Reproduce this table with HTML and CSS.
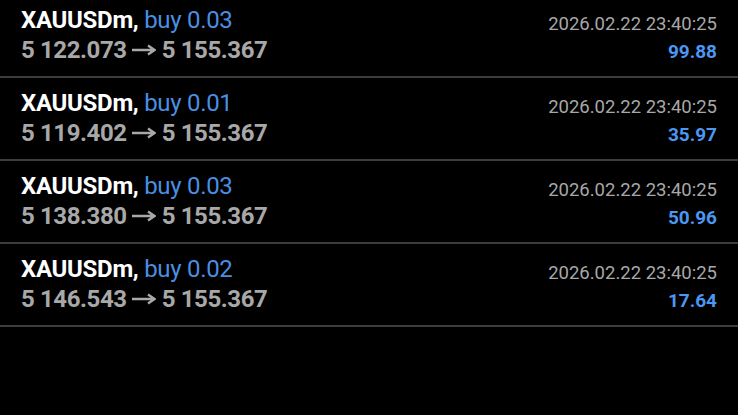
FILE: index.html
```html
<!DOCTYPE html>
<html lang="en">
<head>
    <meta charset="UTF-8">
    <meta name="viewport" content="width=device-width, initial-scale=1.0">
    <title>Positions</title>
    <link rel="stylesheet" href="styles.css">
</head>
<body>
    <div class="list">
        <div class="row">
            <div class="left">
                <div class="title"><span class="symbol">XAUUSDm,</span> <span class="side">buy 0.03</span></div>
                <div class="prices">5 122.073<svg class="arrow" viewBox="0 0 24 12"><path d="M0 6H22M16 1.5L22.5 6L16 10.5"/></svg>5 155.367</div>
            </div>
            <div class="right">
                <div class="time">2026.02.22 23:40:25</div>
                <div class="profit">99.88</div>
            </div>
        </div>
        <div class="row">
            <div class="left">
                <div class="title"><span class="symbol">XAUUSDm,</span> <span class="side">buy 0.01</span></div>
                <div class="prices">5 119.402<svg class="arrow" viewBox="0 0 24 12"><path d="M0 6H22M16 1.5L22.5 6L16 10.5"/></svg>5 155.367</div>
            </div>
            <div class="right">
                <div class="time">2026.02.22 23:40:25</div>
                <div class="profit">35.97</div>
            </div>
        </div>
        <div class="row">
            <div class="left">
                <div class="title"><span class="symbol">XAUUSDm,</span> <span class="side">buy 0.03</span></div>
                <div class="prices">5 138.380<svg class="arrow" viewBox="0 0 24 12"><path d="M0 6H22M16 1.5L22.5 6L16 10.5"/></svg>5 155.367</div>
            </div>
            <div class="right">
                <div class="time">2026.02.22 23:40:25</div>
                <div class="profit">50.96</div>
            </div>
        </div>
        <div class="row">
            <div class="left">
                <div class="title"><span class="symbol">XAUUSDm,</span> <span class="side">buy 0.02</span></div>
                <div class="prices">5 146.543<svg class="arrow" viewBox="0 0 24 12"><path d="M0 6H22M16 1.5L22.5 6L16 10.5"/></svg>5 155.367</div>
            </div>
            <div class="right">
                <div class="time">2026.02.22 23:40:25</div>
                <div class="profit">17.64</div>
            </div>
        </div>
    </div>
</body>
</html>
```

FILE: styles.css
```css
body {
    background-color: #000;
    color: #fff;
    font-family: Roboto, "Liberation Sans", sans-serif;
    margin: 0;
    padding: 0;
}
.list {
    margin-top: -5px;
}
.row {
    display: flex;
    justify-content: space-between;
    padding: 5px 21px 0;
    box-sizing: border-box;
    height: 83px;
    border-bottom: 2px solid #3c3c3c;
}
.left {
    padding-top: 5px;
}
.title {
    font-size: 24px;
    line-height: 30px;
    letter-spacing: -0.3px;
}
.symbol {
    font-weight: bold;
    color: #fff;
}
.side {
    color: #4a8fe2;
}
.prices {
    font-size: 24px;
    line-height: 30px;
    font-weight: bold;
    letter-spacing: -0.4px;
    color: #a8a8a8;
}
.arrow {
    width: 24px;
    height: 12px;
    margin: 0 6px 0 5px;
    vertical-align: 2px;
    fill: none;
    stroke: #a8a8a8;
    stroke-width: 2.4;
}
.right {
    padding-top: 10px;
    text-align: right;
}
.time {
    font-size: 18.5px;
    line-height: 28px;
    color: #a8a8a8;
}
.profit {
    font-size: 19px;
    line-height: 28px;
    font-weight: bold;
    color: #4b97f2;
}
```
